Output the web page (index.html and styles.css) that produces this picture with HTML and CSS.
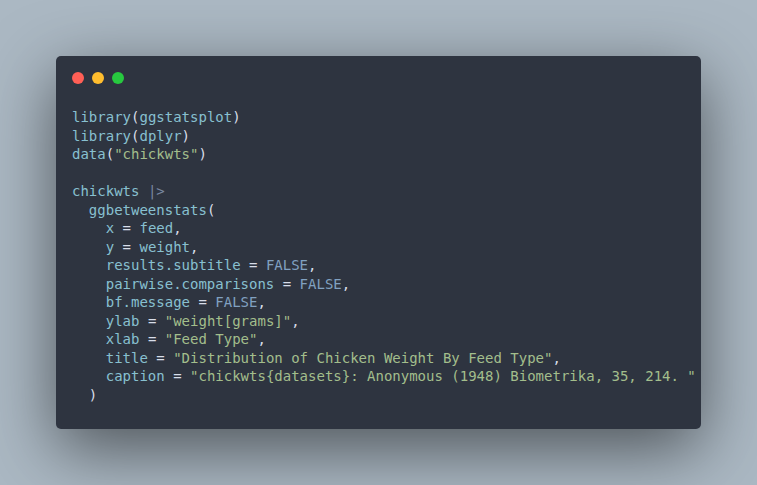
FILE: index.html
```html
<!DOCTYPE html>
<html>
<head>
<meta charset="utf-8">
<link rel="stylesheet" href="styles.css">
</head>
<body>
<div class="stage">
  <div class="window">
    <div class="controls">
      <span class="dot red"></span>
      <span class="dot yellow"></span>
      <span class="dot green"></span>
    </div>
<pre class="code"><span class="id">library</span><span class="p">(</span><span class="id">ggstatsplot</span><span class="p">)</span>
<span class="id">library</span><span class="p">(</span><span class="id">dplyr</span><span class="p">)</span>
<span class="id">data</span><span class="p">(</span><span class="s">"chickwts"</span><span class="p">)</span>

<span class="id">chickwts</span> <span class="op">|&gt;</span>
  <span class="id">ggbetweenstats</span><span class="p">(</span>
    <span class="id">x</span> <span class="p">=</span> <span class="id">feed</span><span class="p">,</span>
    <span class="id">y</span> <span class="p">=</span> <span class="id">weight</span><span class="p">,</span>
    <span class="id">results.subtitle</span> <span class="p">=</span> <span class="k">FALSE</span><span class="p">,</span>
    <span class="id">pairwise.comparisons</span> <span class="p">=</span> <span class="k">FALSE</span><span class="p">,</span>
    <span class="id">bf.message</span> <span class="p">=</span> <span class="k">FALSE</span><span class="p">,</span>
    <span class="id">ylab</span> <span class="p">=</span> <span class="s">"weight[grams]"</span><span class="p">,</span>
    <span class="id">xlab</span> <span class="p">=</span> <span class="s">"Feed Type"</span><span class="p">,</span>
    <span class="id">title</span> <span class="p">=</span> <span class="s">"Distribution of Chicken Weight By Feed Type"</span><span class="p">,</span>
    <span class="id">caption</span> <span class="p">=</span> <span class="s">"chickwts{datasets}: Anonymous (1948) Biometrika, 35, 214. "</span>
  <span class="p">)</span></pre>
  </div>
</div>
</body>
</html>
```

FILE: styles.css
```css
html, body {
  margin: 0;
  padding: 0;
  background: #abb8c3;
}
.stage {
  padding: 56px;
  width: 645px;
}
.window {
  width: 645px;
  height: 373px;
  box-sizing: border-box;
  background: #2e3440;
  border-radius: 5px;
  box-shadow: 0 20px 68px rgba(0, 0, 0, 0.55);
  padding: 16px 16px 0 16px;
}
.controls {
  display: flex;
  gap: 8px;
  height: 12px;
}
.dot {
  width: 12px;
  height: 12px;
  border-radius: 50%;
  display: block;
}
.red { background: #ff5f56; }
.yellow { background: #ffbd2e; }
.green { background: #27c93f; }
.code {
  margin: 24px 0 0 0;
  font-family: "DejaVu Sans Mono", monospace;
  font-size: 14px;
  line-height: 18.5px;
  color: #d8dee9;
  white-space: pre;
}
.id { color: #88c0d0; }
.p { color: #d8dee9; }
.s { color: #a3be8c; }
.k { color: #81a1c1; }
.op { color: #7b88a1; }
```
